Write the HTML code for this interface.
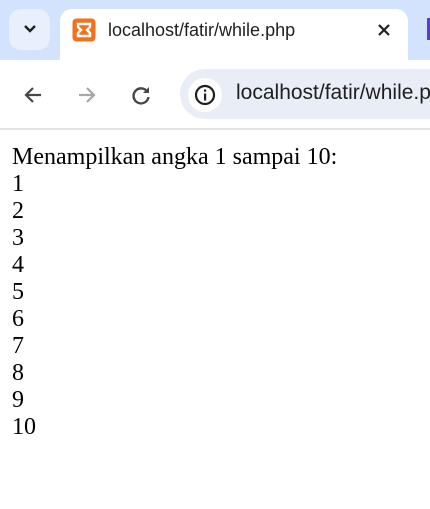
<!DOCTYPE html>
<html><head><meta charset="utf-8"><style>
*{margin:0;padding:0;box-sizing:border-box}
html,body{width:430px;height:509px;overflow:hidden}
body{background:#fff;position:relative;font-family:"Liberation Sans",sans-serif}
.top{position:absolute;left:0;top:0;width:430px;height:60px;background:#d3e3fd}
.dd{position:absolute;left:9px;top:9px;width:41px;height:41px;border-radius:12px;background:#e9effd}
.tab{position:absolute;left:60px;top:9px;width:348px;height:52px;background:#fff;border-radius:12px 12px 0 0}
.tabt{position:absolute;left:108px;top:20px;font-size:18px;color:#1f1f1f}
.bar{position:absolute;left:0;top:60px;width:430px;height:68px;background:#fff}
.line{position:absolute;left:0;top:128px;width:430px;height:2px;background:#e3e3e3}
.omni{position:absolute;left:180px;top:69px;width:250px;height:50px;border-radius:25px 0 0 25px;background:#e9eef6;overflow:hidden}
.ic{position:absolute;left:8px;top:9px;width:34px;height:34px;border-radius:17px;background:#fff}
.url{position:absolute;left:56px;top:12px;font-size:21px;color:#1f1f1f;white-space:nowrap}
.content{position:absolute;left:12px;top:144px;font-family:"Liberation Serif",serif;font-size:24px;line-height:27px;color:#000}
</style></head><body>
<div class="top"></div>
<div class="dd"></div>
<svg style="position:absolute;left:22px;top:23px" width="16" height="12"><path d="M3 3l5 5 5-5" fill="none" stroke="#1f1f1f" stroke-width="2.4"/></svg>
<div class="tab"></div>
<div style="position:absolute;left:427px;top:18px;width:3px;height:22px;background:#5b3fd0"></div>
<svg style="position:absolute;left:72px;top:18px" width="24" height="24"><rect x="0.5" y="0.5" width="23" height="23" rx="4" fill="#f2711c"/><path d="M6 6h12v3l-3 3 3 3v3H6v-3l3-3-3-3z" fill="none" stroke="#fff" stroke-width="2.4"/></svg>
<div class="tabt">localhost/fatir/while.php</div>
<svg style="position:absolute;left:377px;top:23px" width="14" height="14"><path d="M2 2l10 10M12 2L2 12" stroke="#1f1f1f" stroke-width="2.2"/></svg>
<div class="bar"></div>
<div class="line"></div>
<svg style="position:absolute;left:22px;top:84px" width="22" height="22"><path d="M19 11H4M11 4l-7 7 7 7" fill="none" stroke="#474747" stroke-width="2.2"/></svg>
<svg style="position:absolute;left:76px;top:84px" width="22" height="22"><path d="M3 11h15M11 4l7 7-7 7" fill="none" stroke="#a8a8a8" stroke-width="2.2"/></svg>
<svg style="position:absolute;left:130px;top:84px" width="22" height="22"><path d="M17.5 8A7.5 7.5 0 1 0 18.5 13" fill="none" stroke="#474747" stroke-width="2.4"/><path d="M19 3v6h-6z" fill="#474747"/></svg>
<div class="omni"><div class="ic"></div>
<svg style="position:absolute;left:14px;top:15px" width="22" height="22"><circle cx="11" cy="11" r="9" fill="none" stroke="#1f1f1f" stroke-width="2.2"/><rect x="10" y="9.5" width="2.2" height="7" fill="#1f1f1f"/><rect x="10" y="5.5" width="2.2" height="2.2" fill="#1f1f1f"/></svg>
<div class="url">localhost/fatir/while.php</div></div>
<div class="content">Menampilkan angka 1 sampai 10:<br>1<br>2<br>3<br>4<br>5<br>6<br>7<br>8<br>9<br>10</div>
</body></html>
